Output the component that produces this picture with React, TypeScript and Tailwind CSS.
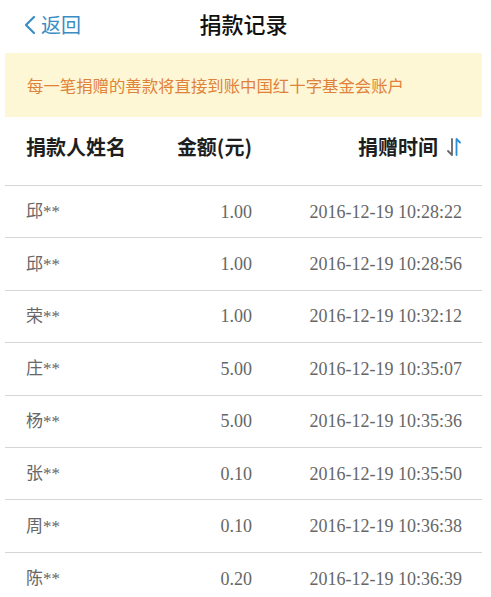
const RECORDS = [
  { name: '邱**', amount: '1.00', time: '2016-12-19 10:28:22' },
  { name: '邱**', amount: '1.00', time: '2016-12-19 10:28:56' },
  { name: '荣**', amount: '1.00', time: '2016-12-19 10:32:12' },
  { name: '庄**', amount: '5.00', time: '2016-12-19 10:35:07' },
  { name: '杨**', amount: '5.00', time: '2016-12-19 10:35:36' },
  { name: '张**', amount: '0.10', time: '2016-12-19 10:35:50' },
  { name: '周**', amount: '0.10', time: '2016-12-19 10:36:38' },
  { name: '陈**', amount: '0.20', time: '2016-12-19 10:36:39' },
];

function SortIcon() {
  return (
    <svg width="16" height="20" viewBox="0 0 16 20" fill="none" strokeWidth="1.8" strokeLinecap="round" strokeLinejoin="round">
      <path d="M6 2 V18 L2 14" stroke="#666" />
      <path d="M10.5 18 V2 L14 5.5" stroke="#2b8fd6" />
    </svg>
  );
}

export default function App() {
  return (
    <div className="min-h-screen bg-white font-['Noto_Sans_CJK_SC',sans-serif] pl-[5px] pr-[9px]">
      {/* Top bar */}
      <div className="relative h-[53px] flex items-center justify-center">
        <div className="absolute left-[18px] top-[15px] flex items-center text-[#3b8cc4] text-[20px] leading-none">
          <svg width="14" height="20" viewBox="0 0 14 20" fill="none" stroke="#3b8cc4" strokeWidth="2.2" strokeLinecap="round" strokeLinejoin="round">
            <path d="M11 2 L3 10 L11 18" />
          </svg>
          <span className="ml-[4px]">返回</span>
        </div>
        <h1 className="text-[22px] font-medium text-[#111] leading-none -mt-[8px]">捐款记录</h1>
      </div>

      {/* Notice */}
      <div className="h-[64px] bg-[#fdf7d6] flex items-center pl-[22px] pt-[1px]">
        <p className="text-[16.4px] text-[#e0823a] leading-none">每一笔捐赠的善款将直接到账中国红十字基金会账户</p>
      </div>

      {/* Table head */}
      <div className="h-[69px] flex items-center pl-[21px] pr-[20px] border-b border-[#d6d6d6] pb-[9px] text-[20px] font-bold text-[#1e1e1e] leading-none">
        <div className="w-[150px]">捐款人姓名</div>
        <div className="w-[76px] text-right">金额(元)</div>
        <div className="flex-1 flex items-center justify-end gap-[8px]">
          <span>捐赠时间</span>
          <SortIcon />
        </div>
      </div>

      {/* Rows */}
      {RECORDS.map((r, i) => (
        <div
          key={i}
          className="h-[52.4px] flex items-center pl-[21px] pr-[20px] border-b border-[#d6d6d6] last:border-b-0 font-['Liberation_Serif','Noto_Sans_CJK_SC',serif] text-[18px] text-[#666] leading-none"
        >
          <div className="w-[150px] text-[17px]">{r.name}</div>
          <div className="w-[76px] text-right">{r.amount}</div>
          <div className="flex-1 text-right">{r.time}</div>
        </div>
      ))}
    </div>
  );
}
